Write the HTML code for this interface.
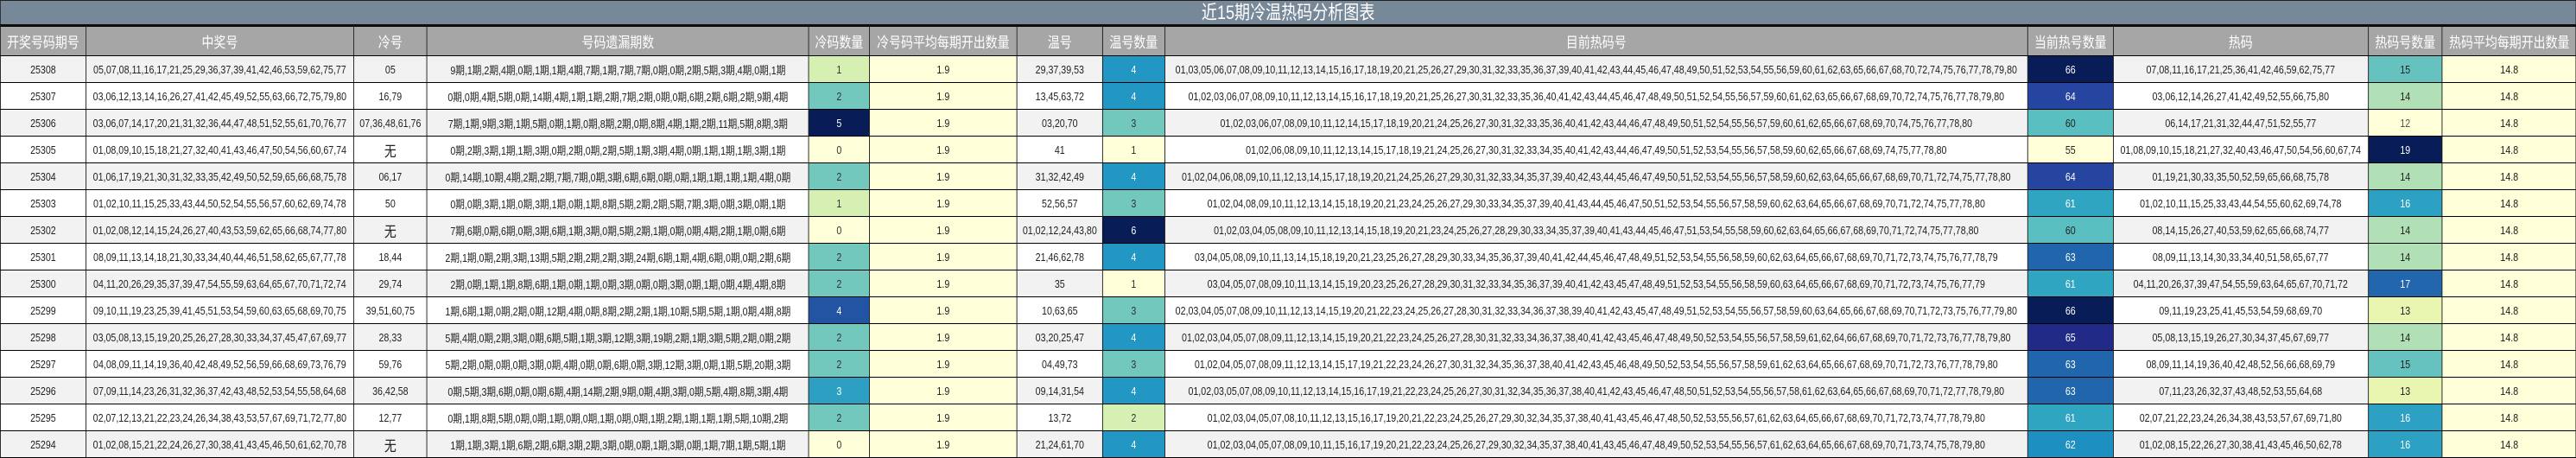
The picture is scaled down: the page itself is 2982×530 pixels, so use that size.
<!DOCTYPE html>
<html><head><meta charset="utf-8">
<style>
html,body{margin:0;padding:0;background:#fff;}
body{width:2982px;height:530px;overflow:hidden;}
#wrap{width:3637px;transform:scaleX(0.82);transform-origin:0 0;}
.title{line-height:28px;background:#778899;color:#fff;text-align:center;font-family:"Liberation Sans","Noto Sans CJK SC",sans-serif;font-size:22px;border:1px solid #222;border-bottom:2px solid #111;box-sizing:border-box;height:30px;}
table{border-collapse:collapse;table-layout:fixed;width:3637px;font-family:"Liberation Sans","Noto Sans CJK SC",sans-serif;font-size:13px;color:#222;}
td,th{border:1px solid #000;text-align:center;white-space:nowrap;overflow:hidden;padding:0;}
th{background:#a6a6a6;color:#fff;font-weight:normal;font-size:17px;height:33px;}
td{height:30px;}
tr.g td{background:#f2f2f2;}
tr.w td{background:#fff;}
tr td.y{background:#ffffd9;}
.c0{background:#ffffd9!important;color:#333;}
.c1{background:#d6efb3!important;color:#333;}
.c2{background:#73c8bd!important;color:#333;}
.c3{background:#2c9fc2!important;color:#fff;}
.c4{background:#2397c4!important;color:#fff;}
.c4b{background:#2353a3!important;color:#fff;}
.c6{background:#081d58!important;color:#fff;}
.h66{background:#081d58!important;color:#fff;}
.h65{background:#212b87!important;color:#fff;}
.h64{background:#2545a0!important;color:#fff;}
.h63{background:#2166ac!important;color:#fff;}
.h62{background:#1d8fc0!important;color:#fff;}
.h61{background:#30a5c2!important;color:#fff;}
.h60{background:#5abfc0!important;color:#222;}
.h55{background:#ffffd9!important;color:#222;}
.k12{background:#ffffd9!important;color:#555;}
.k13{background:#e8f6b1!important;color:#222;}
.k14{background:#b1e0b6!important;color:#222;}
.k15{background:#66c2bf!important;color:#222;}
.k16{background:#2ca1c3!important;color:#fff;}
.k17{background:#2266ad!important;color:#fff;}
.k19{background:#081d58!important;color:#fff;}
.wu{font-size:17px;font-family:"Noto Sans CJK SC",sans-serif;}
</style></head><body>
<div id="wrap">
<div class="title">近15期冷温热码分析图表</div>
<table>
<colgroup>
<col style="width:120.7px"><col style="width:378px"><col style="width:103.7px"><col style="width:539px"><col style="width:85.4px"><col style="width:208.5px"><col style="width:120.7px"><col style="width:87.8px"><col style="width:1218.3px"><col style="width:120.7px"><col style="width:359.8px"><col style="width:104.9px"><col style="width:189px">
</colgroup>
<tr><th>开奖号码期号</th><th>中奖号</th><th>冷号</th><th>号码遗漏期数</th><th>冷码数量</th><th>冷号码平均每期开出数量</th><th>温号</th><th>温号数量</th><th>目前热码号</th><th>当前热号数量</th><th>热码</th><th>热码号数量</th><th>热码平均每期开出数量</th></tr>
<tr class="g"><td>25308</td><td>05,07,08,11,16,17,21,25,29,36,37,39,41,42,46,53,59,62,75,77</td><td>05</td><td>9期,1期,2期,4期,0期,1期,1期,4期,7期,1期,7期,7期,0期,0期,2期,5期,3期,4期,0期,1期</td><td class="c1">1</td><td class="y">1.9</td><td>29,37,39,53</td><td class="c4">4</td><td>01,03,05,06,07,08,09,10,11,12,13,14,15,16,17,18,19,20,21,25,26,27,29,30,31,32,33,35,36,37,39,40,41,42,43,44,45,46,47,48,49,50,51,52,53,54,55,56,59,60,61,62,63,65,66,67,68,70,72,74,75,76,77,78,79,80</td><td class="h66">66</td><td>07,08,11,16,17,21,25,36,41,42,46,59,62,75,77</td><td class="k15">15</td><td class="y">14.8</td></tr>
<tr class="w"><td>25307</td><td>03,06,12,13,14,16,26,27,41,42,45,49,52,55,63,66,72,75,79,80</td><td>16,79</td><td>0期,0期,4期,5期,0期,14期,4期,1期,1期,2期,7期,2期,0期,0期,6期,2期,6期,2期,9期,4期</td><td class="c2">2</td><td class="y">1.9</td><td>13,45,63,72</td><td class="c4">4</td><td>01,02,03,06,07,08,09,10,11,12,13,14,15,16,17,18,19,20,21,25,26,27,30,31,32,33,35,36,40,41,42,43,44,45,46,47,48,49,50,51,52,54,55,56,57,59,60,61,62,63,65,66,67,68,69,70,72,74,75,76,77,78,79,80</td><td class="h64">64</td><td>03,06,12,14,26,27,41,42,49,52,55,66,75,80</td><td class="k14">14</td><td class="y">14.8</td></tr>
<tr class="g"><td>25306</td><td>03,06,07,14,17,20,21,31,32,36,44,47,48,51,52,55,61,70,76,77</td><td>07,36,48,61,76</td><td>7期,1期,9期,3期,1期,5期,0期,1期,0期,8期,2期,0期,8期,4期,1期,2期,11期,5期,8期,3期</td><td class="c6">5</td><td class="y">1.9</td><td>03,20,70</td><td class="c2">3</td><td>01,02,03,06,07,08,09,10,11,12,14,15,17,18,19,20,21,24,25,26,27,30,31,32,33,35,36,40,41,42,43,44,46,47,48,49,50,51,52,54,55,56,57,59,60,61,62,65,66,67,68,69,70,74,75,76,77,78,80</td><td class="h60">60</td><td>06,14,17,21,31,32,44,47,51,52,55,77</td><td class="k12">12</td><td class="y">14.8</td></tr>
<tr class="w"><td>25305</td><td>01,08,09,10,15,18,21,27,32,40,41,43,46,47,50,54,56,60,67,74</td><td class="wu">无</td><td>0期,2期,3期,1期,1期,3期,0期,2期,0期,2期,5期,1期,3期,4期,0期,1期,1期,1期,3期,1期</td><td class="c0">0</td><td class="y">1.9</td><td>41</td><td class="c0">1</td><td>01,02,06,08,09,10,11,12,13,14,15,17,18,19,21,24,25,26,27,30,31,32,33,34,35,40,41,42,43,44,46,47,49,50,51,52,53,54,55,56,57,58,59,60,62,65,66,67,68,69,74,75,77,78,80</td><td class="h55">55</td><td>01,08,09,10,15,18,21,27,32,40,43,46,47,50,54,56,60,67,74</td><td class="k19">19</td><td class="y">14.8</td></tr>
<tr class="g"><td>25304</td><td>01,06,17,19,21,30,31,32,33,35,42,49,50,52,59,65,66,68,75,78</td><td>06,17</td><td>0期,14期,10期,4期,2期,2期,7期,7期,0期,3期,6期,6期,0期,0期,1期,1期,1期,1期,4期,0期</td><td class="c2">2</td><td class="y">1.9</td><td>31,32,42,49</td><td class="c4">4</td><td>01,02,04,06,08,09,10,11,12,13,14,15,17,18,19,20,21,24,25,26,27,29,30,31,32,33,34,35,37,39,40,42,43,44,45,46,47,49,50,51,52,53,54,55,56,57,58,59,60,62,63,64,65,66,67,68,69,70,71,72,74,75,77,78,80</td><td class="h64">64</td><td>01,19,21,30,33,35,50,52,59,65,66,68,75,78</td><td class="k14">14</td><td class="y">14.8</td></tr>
<tr class="w"><td>25303</td><td>01,02,10,11,15,25,33,43,44,50,52,54,55,56,57,60,62,69,74,78</td><td>50</td><td>0期,0期,3期,1期,0期,3期,1期,0期,1期,8期,5期,2期,2期,5期,7期,3期,0期,3期,0期,1期</td><td class="c1">1</td><td class="y">1.9</td><td>52,56,57</td><td class="c2">3</td><td>01,02,04,08,09,10,11,12,13,14,15,18,19,20,21,23,24,25,26,27,29,30,33,34,35,37,39,40,41,43,44,45,46,47,50,51,52,53,54,55,56,57,58,59,60,62,63,64,65,66,67,68,69,70,71,72,74,75,77,78,80</td><td class="h61">61</td><td>01,02,10,11,15,25,33,43,44,54,55,60,62,69,74,78</td><td class="k16">16</td><td class="y">14.8</td></tr>
<tr class="g"><td>25302</td><td>01,02,08,12,14,15,24,26,27,40,43,53,59,62,65,66,68,74,77,80</td><td class="wu">无</td><td>7期,6期,0期,6期,0期,3期,6期,1期,3期,0期,5期,2期,1期,0期,0期,4期,2期,1期,0期,6期</td><td class="c0">0</td><td class="y">1.9</td><td>01,02,12,24,43,80</td><td class="c6">6</td><td>01,02,03,04,05,08,09,10,11,12,13,14,15,18,19,20,21,23,24,25,26,27,28,29,30,33,34,35,37,39,40,41,43,44,45,46,47,51,53,54,55,58,59,60,62,63,64,65,66,67,68,69,70,71,72,74,75,77,78,80</td><td class="h60">60</td><td>08,14,15,26,27,40,53,59,62,65,66,68,74,77</td><td class="k14">14</td><td class="y">14.8</td></tr>
<tr class="w"><td>25301</td><td>08,09,11,13,14,18,21,30,33,34,40,44,46,51,58,62,65,67,77,78</td><td>18,44</td><td>2期,1期,0期,2期,3期,13期,5期,2期,2期,2期,3期,24期,6期,1期,4期,6期,0期,0期,2期,6期</td><td class="c2">2</td><td class="y">1.9</td><td>21,46,62,78</td><td class="c4">4</td><td>03,04,05,08,09,10,11,13,14,15,18,19,20,21,23,25,26,27,28,29,30,33,34,35,36,37,39,40,41,42,44,45,46,47,48,49,51,52,53,54,55,56,58,59,60,62,63,64,65,66,67,68,69,70,71,72,73,74,75,76,77,78,79</td><td class="h63">63</td><td>08,09,11,13,14,30,33,34,40,51,58,65,67,77</td><td class="k14">14</td><td class="y">14.8</td></tr>
<tr class="g"><td>25300</td><td>04,11,20,26,29,35,37,39,47,54,55,59,63,64,65,67,70,71,72,74</td><td>29,74</td><td>2期,0期,1期,1期,8期,6期,1期,0期,1期,0期,3期,0期,0期,3期,0期,1期,0期,4期,4期,8期</td><td class="c2">2</td><td class="y">1.9</td><td>35</td><td class="c0">1</td><td>03,04,05,07,08,09,10,11,13,14,15,19,20,23,25,26,27,28,29,30,31,32,33,34,35,36,37,39,40,41,42,43,45,47,48,49,51,52,53,54,55,56,58,59,60,63,64,65,66,67,68,69,70,71,72,73,74,75,76,77,79</td><td class="h61">61</td><td>04,11,20,26,37,39,47,54,55,59,63,64,65,67,70,71,72</td><td class="k17">17</td><td class="y">14.8</td></tr>
<tr class="w"><td>25299</td><td>09,10,11,19,23,25,39,41,45,51,53,54,59,60,63,65,68,69,70,75</td><td>39,51,60,75</td><td>1期,6期,1期,0期,2期,0期,12期,4期,0期,8期,2期,2期,1期,10期,5期,5期,1期,0期,4期,8期</td><td class="c4b">4</td><td class="y">1.9</td><td>10,63,65</td><td class="c2">3</td><td>02,03,04,05,07,08,09,10,11,12,13,14,15,19,20,21,22,23,24,25,26,27,28,30,31,32,33,34,36,37,38,39,40,41,42,43,45,47,48,49,51,52,53,54,55,56,57,58,59,60,63,64,65,66,67,68,69,70,71,72,73,75,76,77,79,80</td><td class="h66">66</td><td>09,11,19,23,25,41,45,53,54,59,68,69,70</td><td class="k13">13</td><td class="y">14.8</td></tr>
<tr class="g"><td>25298</td><td>03,05,08,13,15,19,20,25,26,27,28,30,33,34,37,45,47,67,69,77</td><td>28,33</td><td>5期,4期,0期,2期,3期,0期,6期,5期,1期,3期,12期,3期,19期,2期,1期,3期,5期,2期,0期,2期</td><td class="c2">2</td><td class="y">1.9</td><td>03,20,25,47</td><td class="c4">4</td><td>01,02,03,04,05,07,08,09,11,12,13,14,15,19,20,21,22,23,24,25,26,27,28,30,31,32,33,34,36,37,38,40,41,42,43,45,46,47,48,49,50,52,53,54,55,56,57,58,59,61,62,64,66,67,68,69,70,71,72,73,76,77,78,79,80</td><td class="h65">65</td><td>05,08,13,15,19,26,27,30,34,37,45,67,69,77</td><td class="k14">14</td><td class="y">14.8</td></tr>
<tr class="w"><td>25297</td><td>04,08,09,11,14,19,36,40,42,48,49,52,56,59,66,68,69,73,76,79</td><td>59,76</td><td>5期,2期,0期,0期,0期,3期,0期,4期,0期,0期,6期,0期,3期,12期,3期,0期,1期,5期,20期,3期</td><td class="c2">2</td><td class="y">1.9</td><td>04,49,73</td><td class="c2">3</td><td>01,02,04,05,07,08,09,11,12,13,14,15,17,19,21,22,23,24,26,27,30,31,32,34,35,36,37,38,40,41,42,43,45,46,48,49,50,52,53,54,55,56,57,58,59,61,62,63,64,65,66,67,68,69,70,71,72,73,76,77,78,79,80</td><td class="h63">63</td><td>08,09,11,14,19,36,40,42,48,52,56,66,68,69,79</td><td class="k15">15</td><td class="y">14.8</td></tr>
<tr class="g"><td>25296</td><td>07,09,11,14,23,26,31,32,36,37,42,43,48,52,53,54,55,58,64,68</td><td>36,42,58</td><td>0期,5期,3期,6期,0期,0期,6期,4期,14期,2期,9期,0期,4期,3期,0期,5期,4期,8期,3期,4期</td><td class="c3">3</td><td class="y">1.9</td><td>09,14,31,54</td><td class="c4">4</td><td>01,02,03,05,07,08,09,10,11,12,13,14,15,16,17,19,21,22,23,24,25,26,27,30,31,32,34,35,36,37,38,40,41,42,43,45,46,47,48,50,51,52,53,54,55,56,57,58,61,62,63,64,65,66,67,68,69,70,71,72,77,78,79,80</td><td class="h63">63</td><td>07,11,23,26,32,37,43,48,52,53,55,64,68</td><td class="k13">13</td><td class="y">14.8</td></tr>
<tr class="w"><td>25295</td><td>02,07,12,13,21,22,23,24,26,34,38,43,53,57,67,69,71,72,77,80</td><td>12,77</td><td>0期,1期,8期,5期,0期,0期,1期,0期,0期,1期,0期,0期,1期,2期,1期,1期,1期,5期,10期,2期</td><td class="c2">2</td><td class="y">1.9</td><td>13,72</td><td class="c1">2</td><td>01,02,03,04,05,07,08,10,11,12,13,15,16,17,19,20,21,22,23,24,25,26,27,29,30,32,34,35,37,38,40,41,43,45,46,47,48,50,52,53,55,56,57,61,62,63,64,65,66,67,68,69,70,71,72,73,74,77,78,79,80</td><td class="h61">61</td><td>02,07,21,22,23,24,26,34,38,43,53,57,67,69,71,80</td><td class="k16">16</td><td class="y">14.8</td></tr>
<tr class="g"><td>25294</td><td>01,02,08,15,21,22,24,26,27,30,38,41,43,45,46,50,61,62,70,78</td><td class="wu">无</td><td>1期,1期,3期,1期,6期,2期,6期,3期,2期,3期,0期,0期,1期,3期,0期,1期,7期,1期,5期,1期</td><td class="c0">0</td><td class="y">1.9</td><td>21,24,61,70</td><td class="c4">4</td><td>01,02,03,04,05,07,08,09,10,11,15,16,17,19,20,21,22,23,24,25,26,27,29,30,32,34,35,37,38,40,41,43,45,46,47,48,49,50,52,53,54,55,56,57,61,62,63,64,65,66,67,68,69,70,71,73,74,75,78,79,80</td><td class="h62">62</td><td>01,02,08,15,22,26,27,30,38,41,43,45,46,50,62,78</td><td class="k16">16</td><td class="y">14.8</td></tr>
</table>
</div>
</body></html>
